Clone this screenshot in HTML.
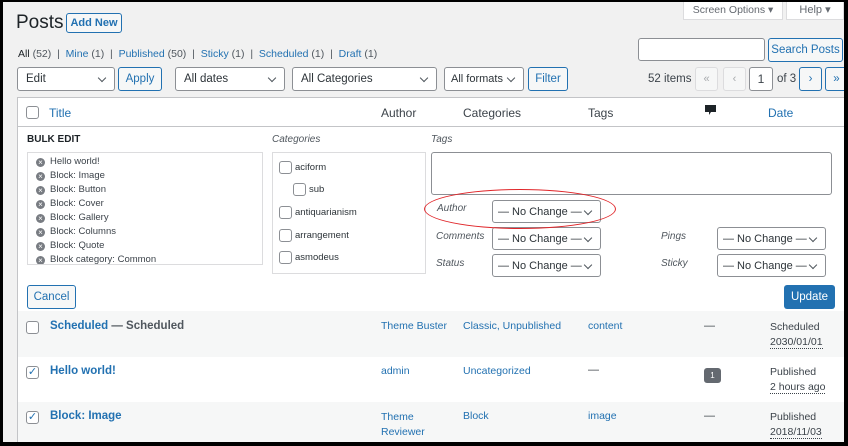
<!DOCTYPE html><html><head><style>
*{box-sizing:border-box;margin:0;padding:0}
body{width:848px;height:446px;overflow:hidden;background:#000;font-family:"Liberation Sans",Arial,sans-serif;font-size:11px;color:#3c434a;position:relative}
#pg{position:absolute;left:3px;top:2px;width:841px;height:440px;background:#f1f1f1;overflow:hidden}
.a{position:absolute}
.lk{color:#2271b1}
.sel{position:absolute;background:#fff;border:1px solid #8c8f94;border-radius:3px;height:24px;padding:0 8px;font-size:11.5px;color:#2c3338;display:flex;align-items:center;white-space:nowrap}
.sel:after{content:"";position:absolute;right:9px;top:7px;width:5px;height:5px;border-right:1.3px solid #50575e;border-bottom:1.3px solid #50575e;transform:rotate(45deg)}
.btn{position:absolute;background:#f6f7f7;border:1px solid #2271b1;border-radius:3px;color:#2271b1;height:24px;font-size:11.5px;display:flex;align-items:center;justify-content:center}
.cb{position:absolute;width:13px;height:13px;border:1px solid #8c8f94;border-radius:3px;background:#fff}
.it{font-style:italic;color:#50575e;font-size:10px}
.x{display:inline-block;width:9px;height:9px;border-radius:50%;background:#787c82;color:#fff;font-size:8px;line-height:9px;text-align:center;margin-right:5px;vertical-align:-1px}
.nc{font-size:11px;padding:0 5px}
</style></head><body><div id="pg">
<div class="a" style="left:13px;top:10px;font-size:19px;color:#1d2327">Posts</div>
<div class="btn" style="left:63px;top:11px;width:56px;height:20px;font-weight:bold;font-size:11px">Add New</div>
<div class="a" style="left:680px;top:-4px;width:100px;height:22px;background:#fff;border:1px solid #dcdcde;text-align:center;line-height:22px;color:#646970;font-size:10.5px">Screen Options ▾</div>
<div class="a" style="left:783px;top:-4px;width:58px;height:22px;background:#fff;border:1px solid #dcdcde;text-align:center;line-height:22px;color:#646970">Help ▾</div>
<div class="a" style="left:15px;top:46px;font-size:10.5px;color:#50575e"><b style="color:#1d2327;font-weight:normal">All</b> (52) &nbsp;|&nbsp; <span class="lk">Mine</span> (1) &nbsp;|&nbsp; <span class="lk">Published</span> (50) &nbsp;|&nbsp; <span class="lk">Sticky</span> (1) &nbsp;|&nbsp; <span class="lk">Scheduled</span> (1) &nbsp;|&nbsp; <span class="lk">Draft</span> (1)</div>
<div class="a" style="left:635px;top:36px;width:127px;height:23px;background:#fff;border:1px solid #8c8f94;border-radius:3px"></div>
<div class="btn" style="left:765px;top:36px;width:75px;height:24px">Search Posts</div>
<div class="sel" style="left:14px;top:65px;width:98px">Edit</div>
<div class="btn" style="left:115px;top:65px;width:44px">Apply</div>
<div class="sel" style="left:172px;top:65px;width:110px">All dates</div>
<div class="sel" style="left:289px;top:65px;width:145px">All Categories</div>
<div class="sel" style="left:441px;top:65px;width:80px;padding:0 6px;font-size:11px">All formats</div>
<div class="btn" style="left:525px;top:65px;width:40px">Filter</div>
<div class="a" style="left:645px;top:71px;font-size:11.5px;color:#3c434a">52 items</div>
<div class="a" style="left:692px;top:65px;width:23px;height:24px;border:1px solid #dcdcde;background:#f6f7f7;color:#a7aaad;text-align:center;line-height:22px;border-radius:3px">«</div>
<div class="a" style="left:720px;top:65px;width:23px;height:24px;border:1px solid #dcdcde;background:#f6f7f7;color:#a7aaad;text-align:center;line-height:22px;border-radius:3px">‹</div>
<div class="a" style="left:746px;top:65px;width:24px;height:24px;border:1px solid #8c8f94;background:#fff;text-align:center;line-height:22px;border-radius:3px;font-size:12px">1</div>
<div class="a" style="left:774px;top:71px;font-size:11.5px">of 3</div>
<div class="btn" style="left:796px;top:65px;width:23px">›</div>
<div class="btn" style="left:822px;top:65px;width:23px">»</div>
<!-- table -->
<div class="a" style="left:14px;top:95px;width:828px;height:350px;background:#fff;border:1px solid #c3c4c7"></div>
<div class="a" style="left:15px;top:124px;width:826px;height:1px;background:#c3c4c7"></div>
<div class="cb" style="left:23px;top:104px"></div>
<div class="a lk" style="left:46px;top:104px;font-size:12px">Title</div>
<div class="a" style="left:378px;top:104px;font-size:12px">Author</div>
<div class="a" style="left:460px;top:104px;font-size:12px">Categories</div>
<div class="a" style="left:585px;top:104px;font-size:12px">Tags</div>
<svg class="a" style="left:701px;top:102px" width="13" height="13" viewBox="0 0 13 13"><path d="M1 1h11v7H7l-2 3V8H1z" fill="#1d2327"/></svg>
<div class="a lk" style="left:765px;top:104px;font-size:12px">Date</div>
<!-- bulk edit -->
<div class="a" style="left:24px;top:132px;font-size:10px;font-weight:bold;color:#1d2327">BULK EDIT</div>
<div class="a it" style="left:269px;top:132px">Categories</div>
<div class="a it" style="left:428px;top:132px">Tags</div>
<div class="a" style="left:24px;top:150px;width:236px;height:113px;border:1px solid #dcdcde;background:#fff;padding:2px 0 0 8px;font-size:9.5px;line-height:14px;color:#3c434a;overflow:hidden">
<div><span class="x">×</span>Hello world!</div><div><span class="x">×</span>Block: Image</div><div><span class="x">×</span>Block: Button</div><div><span class="x">×</span>Block: Cover</div><div><span class="x">×</span>Block: Gallery</div><div><span class="x">×</span>Block: Columns</div><div><span class="x">×</span>Block: Quote</div><div><span class="x">×</span>Block category: Common</div></div>
<div class="a" style="left:269px;top:150px;width:154px;height:122px;border:1px solid #dcdcde;background:#fff;overflow:hidden;font-size:9.5px;color:#2c3338">
<div class="cb" style="left:6px;top:8px"></div><div class="a" style="left:22px;top:9px">aciform</div>
<div class="cb" style="left:20px;top:30px"></div><div class="a" style="left:36px;top:31px">sub</div>
<div class="cb" style="left:6px;top:53px"></div><div class="a" style="left:22px;top:54px">antiquarianism</div>
<div class="cb" style="left:6px;top:76px"></div><div class="a" style="left:22px;top:77px">arrangement</div>
<div class="cb" style="left:6px;top:98px"></div><div class="a" style="left:22px;top:99px">asmodeus</div>
<div class="cb" style="left:6px;top:120px"></div></div>
<div class="a" style="left:428px;top:150px;width:401px;height:43px;border:1px solid #8c8f94;border-radius:3px;background:#fff"></div>
<div class="a it" style="left:434px;top:201px">Author</div>
<div class="a it" style="left:433px;top:229px">Comments</div>
<div class="a it" style="left:433px;top:256px">Status</div>
<div class="a it" style="left:658px;top:229px">Pings</div>
<div class="a it" style="left:658px;top:256px">Sticky</div>
<div class="sel nc" style="left:489px;top:198px;width:109px;height:23px">— No Change —</div>
<div class="sel nc" style="left:489px;top:225px;width:109px;height:23px">— No Change —</div>
<div class="sel nc" style="left:489px;top:252px;width:109px;height:23px">— No Change —</div>
<div class="sel nc" style="left:714px;top:225px;width:109px;height:23px">— No Change —</div>
<div class="sel nc" style="left:714px;top:252px;width:109px;height:23px">— No Change —</div>
<div class="a" style="left:421px;top:187px;width:192px;height:40px;border:1.5px solid #e0262a;border-radius:50%"></div>
<div class="btn" style="left:24px;top:283px;width:49px">Cancel</div>
<div class="a" style="left:781px;top:283px;width:51px;height:24px;background:#2271b1;border-radius:3px;color:#fff;display:flex;align-items:center;justify-content:center;font-size:11.5px">Update</div>
<!-- rows -->
<div class="a" style="left:15px;top:309px;width:826px;height:46px;background:#f6f7f7"></div>
<div class="a" style="left:15px;top:400px;width:826px;height:45px;background:#f6f7f7"></div>
<div class="cb" style="left:23px;top:319px"></div>
<div class="a" style="left:47px;top:318px;font-size:11.5px;font-weight:bold;color:#50575e"><span class="lk">Scheduled</span> — Scheduled</div>
<div class="a lk" style="left:378px;top:318px;font-size:10.5px">Theme Buster</div>
<div class="a lk" style="left:460px;top:318px;font-size:10.5px">Classic, Unpublished</div>
<div class="a lk" style="left:585px;top:318px;font-size:10.5px">content</div>
<div class="a" style="left:701px;top:318px">—</div>
<div class="a" style="left:767px;top:318px;font-size:10.5px;line-height:15px">Scheduled<br><span style="border-bottom:1px dotted #3c434a">2030/01/01</span></div>
<div class="cb" style="left:23px;top:364px;color:#2271b1;font-size:11px;line-height:11px;text-align:center">✓</div>
<div class="a lk" style="left:47px;top:363px;font-size:11.5px;font-weight:bold">Hello world!</div>
<div class="a lk" style="left:378px;top:363px;font-size:10.5px">admin</div>
<div class="a lk" style="left:460px;top:363px;font-size:10.5px">Uncategorized</div>
<div class="a" style="left:585px;top:362px">—</div>
<div class="a" style="left:701px;top:366px;width:17px;height:15px;background:#646970;border-radius:3px;color:#fff;font-size:8px;text-align:center;line-height:15px">1</div>
<div class="a" style="left:767px;top:363px;font-size:10.5px;line-height:15px">Published<br><span style="border-bottom:1px dotted #3c434a">2 hours ago</span></div>
<div class="cb" style="left:23px;top:409px;color:#2271b1;font-size:11px;line-height:11px;text-align:center">✓</div>
<div class="a lk" style="left:47px;top:408px;font-size:11.5px;font-weight:bold">Block: Image</div>
<div class="a lk" style="left:378px;top:408px;font-size:10.5px;line-height:15px">Theme<br>Reviewer</div>
<div class="a lk" style="left:460px;top:408px;font-size:10.5px">Block</div>
<div class="a lk" style="left:585px;top:408px;font-size:10.5px">image</div>
<div class="a" style="left:701px;top:408px">—</div>
<div class="a" style="left:767px;top:408px;font-size:10.5px;line-height:15px">Published<br><span style="border-bottom:1px dotted #3c434a">2018/11/03</span></div>
</div></body></html>
